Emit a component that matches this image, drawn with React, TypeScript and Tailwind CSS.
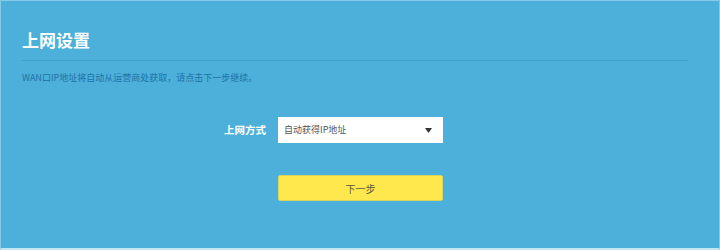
import React from "react";

const App: React.FC = () => {
    return (
        <div
            className="w-[720px] h-[250px] bg-[#4cb0da] border-l border-t border-r border-[#86c8e6] border-b-2 border-b-[#c4e6f3] box-border flex flex-col"
            style={{ fontFamily: '"Noto Sans CJK SC", "Liberation Sans", sans-serif' }}
        >
            <div className="px-[21px] pt-[27px]">
                <div className="text-white font-bold text-[17px] leading-[24px]">上网设置</div>
                <div className="mt-[8px] h-[1px] w-[666px] bg-[#3b9ecb]"></div>
                <div className="mt-[10px] text-[9px] leading-[14px] text-[#1f72a6]">
                    WAN口IP地址将自动从运营商处获取，请点击下一步继续。
                </div>
            </div>
            <div className="flex flex-row items-center mt-[32px] ml-[223px]">
                <div className="w-[54px] text-white font-bold text-[10.5px] leading-[14px]">上网方式</div>
                <div className="w-[165px] h-[26px] bg-white flex flex-row items-center justify-between pl-[6px] pr-[11px]">
                    <span className="text-[9px] text-[#555555]">自动获得IP地址</span>
                    <svg width="7" height="5" viewBox="0 0 7 5">
                        <path d="M0 0 L7 0 L3.5 5 Z" fill="#333333" />
                    </svg>
                </div>
            </div>
            <div className="ml-[277px] mt-[32px]">
                <button className="w-[165px] h-[26px] bg-[#ffe74e] border border-[#d9d45a] rounded-[2px] text-[10px] text-[#5a5a3a] flex items-center justify-center">
                    下一步
                </button>
            </div>
        </div>
    );
};

export default App;
